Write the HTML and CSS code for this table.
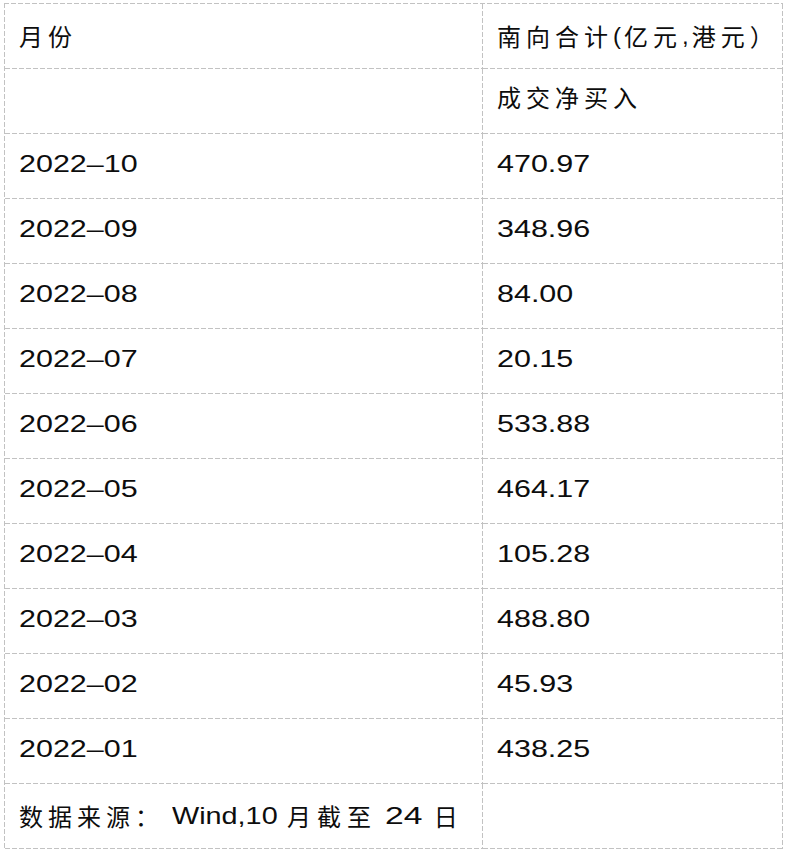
FILE: index.html
```html
<!DOCTYPE html>
<html lang="zh-CN">
<head>
<meta charset="utf-8">
<title>南向资金</title>
<link rel="stylesheet" href="styles.css">
</head>
<body>
<div class="table">
  <div class="cell h1"><span class="cj">月份</span></div>
  <div class="cell h1 right"><span class="cj">南向合计</span><span class="pn">(</span><span class="cj">亿元</span><span class="pn">,</span><span class="cj">港元）</span></div>
  <div class="cell h2"></div>
  <div class="cell h2 right"><span class="cj">成交净买入</span></div>

  <div class="cell"><span class="lat">2022–10</span></div>
  <div class="cell right"><span class="lat">470.97</span></div>
  <div class="cell"><span class="lat">2022–09</span></div>
  <div class="cell right"><span class="lat">348.96</span></div>
  <div class="cell"><span class="lat">2022–08</span></div>
  <div class="cell right"><span class="lat">84.00</span></div>
  <div class="cell"><span class="lat">2022–07</span></div>
  <div class="cell right"><span class="lat">20.15</span></div>
  <div class="cell"><span class="lat">2022–06</span></div>
  <div class="cell right"><span class="lat">533.88</span></div>
  <div class="cell"><span class="lat">2022–05</span></div>
  <div class="cell right"><span class="lat">464.17</span></div>
  <div class="cell"><span class="lat">2022–04</span></div>
  <div class="cell right"><span class="lat">105.28</span></div>
  <div class="cell"><span class="lat">2022–03</span></div>
  <div class="cell right"><span class="lat">488.80</span></div>
  <div class="cell"><span class="lat">2022–02</span></div>
  <div class="cell right"><span class="lat">45.93</span></div>
  <div class="cell"><span class="lat">2022–01</span></div>
  <div class="cell right"><span class="lat">438.25</span></div>

  <div class="cell foot"><span class="cj">数据来源：</span><span class="lat wind">Wind,10</span><span class="cj wide">月截至</span><span class="lat day">24</span><span class="cj">日</span></div>
  <div class="cell foot right"></div>
</div>
</body>
</html>
```

FILE: styles.css
```css
html, body {
  margin: 0;
  padding: 0;
  background: #ffffff;
}

body {
  font-family: "Liberation Sans", "Noto Sans CJK SC", sans-serif;
  color: #0d0d0d;
  font-size: 24px;
}

.table {
  margin: 3px 0 0 4px;
  padding: 1px 0 0 1px;
  display: grid;
  grid-template-columns: 478px 300px;
  grid-auto-rows: 65px;
  width: 779px;
  box-sizing: border-box;
  background-image:
    repeating-linear-gradient(90deg, #c2c2c2 0 5px, transparent 5px 7px),
    repeating-linear-gradient(180deg, #c2c2c2 0 5px, transparent 5px 7px);
  background-size: 100% 1px, 1px 100%;
  background-position: left top, left top;
  background-repeat: no-repeat;
}

.cell {
  box-sizing: border-box;
  display: flex;
  align-items: center;
  padding: 0 0 5px 14px;
  white-space: nowrap;
  line-height: 28px;
  background-image:
    repeating-linear-gradient(90deg, #c2c2c2 0 5px, transparent 5px 7px),
    repeating-linear-gradient(180deg, #c2c2c2 0 5px, transparent 5px 7px);
  background-size: 100% 1px, 1px 100%;
  background-position: left bottom, right top;
  background-repeat: no-repeat;
}

.cell.h1 {
  padding-bottom: 2px;
}

.cell.h2 {
  padding-bottom: 9px;
}

.cell.foot {
  padding-bottom: 2px;
}

.cj {
  font-family: "Noto Sans CJK SC", sans-serif;
  letter-spacing: 5px;
}

.cj.wide {
  letter-spacing: 6px;
  margin-left: 9px;
}

.pn {
  font-family: "Liberation Sans", sans-serif;
  letter-spacing: 3px;
}

.lat {
  display: inline-block;
  transform: scaleX(1.27);
  transform-origin: left center;
  font-family: "Liberation Sans", sans-serif;
}

.lat.wind {
  transform: scaleX(1.2);
  margin-left: 8px;
  margin-right: 18px;
}

.lat.day {
  transform: scaleX(1.4);
  margin-left: 8px;
  margin-right: 22px;
}
```
